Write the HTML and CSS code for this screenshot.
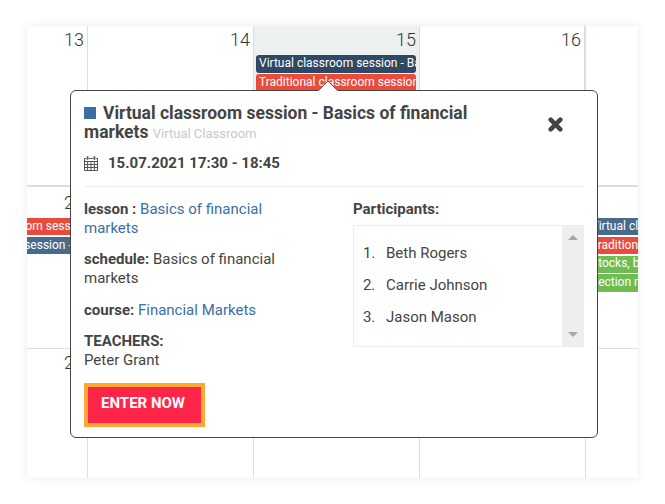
FILE: index.html
```html
<!DOCTYPE html>
<html lang="en">
<head>
<meta charset="utf-8">
<title>Calendar</title>
<link rel="stylesheet" href="styles.css">
</head>
<body>
<main class="stage">
  <div class="calendar">
    <div class="grid">
      <div class="cell row-a"><div class="date">13</div></div>
      <div class="cell row-a"><div class="date">14</div></div>
      <div class="cell row-a today"><div class="date">15</div>
        <div class="events">
          <div class="event navy">Virtual classroom session - Basics of financial markets</div>
          <div class="event red">Traditional classroom session - Basics of financial markets</div>
        </div>
      </div>
      <div class="cell row-a thick"><div class="date">16</div></div>
      <div class="cell row-a"><div class="date">17</div></div>

      <div class="cell row-b"><div class="date">20</div>
        <div class="events">
          <div class="event flat red">Traditional classroom session - Basics</div>
          <div class="event flat blue">Virtual classroom session - Basics</div>
        </div>
      </div>
      <div class="cell row-b"><div class="date">21</div></div>
      <div class="cell row-b"><div class="date">22</div></div>
      <div class="cell row-b"><div class="date">23</div></div>
      <div class="cell row-b"><div class="date">24</div>
        <div class="events">
          <div class="event flat blue">Virtual classroom session</div>
          <div class="event flat red">Traditional classroom session</div>
          <div class="event flat green">Stocks, bonds and funds</div>
          <div class="event flat green last">Section notes</div>
        </div>
      </div>

      <div class="cell row-c"><div class="date">27</div></div>
      <div class="cell row-c"><div class="date">28</div></div>
      <div class="cell row-c"><div class="date">29</div></div>
      <div class="cell row-c"><div class="date">30</div></div>
      <div class="cell row-c"><div class="date">31</div></div>
    </div>
  </div>

  <section class="popup">
    <span class="arrow"></span>
    <header class="head">
      <div class="head-text">
        <h2 class="title"><span class="swatch"></span>Virtual classroom session - Basics of financial markets <small class="kind">Virtual Classroom</small></h2>
        <p class="when">
          <svg class="cal-icon" viewBox="0 0 14 15" aria-hidden="true">
            <path class="cal-line" d="M.5 2.500h13v12H.5zM.5 5.500h13M.5 8.500h13M.5 11.500h13M3.600 5.500v9M7 5.500v9M10.400 5.500v9"/>
            <rect class="cal-ring" x="2.500" y="0" width="2.200" height="4" rx=".8"/>
            <rect class="cal-ring" x="9.300" y="0" width="2.200" height="4" rx=".8"/>
          </svg>
          15.07.2021 17:30 - 18:45
        </p>
      </div>
      <svg class="close" viewBox="0 0 14 14" aria-hidden="true">
        <path d="M2.500 2.500 11.500 11.500M11.500 2.500 2.500 11.500"/>
      </svg>
    </header>
    <div class="body">
      <div class="info">
        <p class="line"><b>lesson :</b> <a href="#">Basics of financial markets</a></p>
        <p class="line"><b>schedule:</b> Basics of financial markets</p>
        <p class="line"><b>course:</b> <a href="#">Financial Markets</a></p>
        <p class="line"><b>TEACHERS:</b><br>Peter Grant</p>
        <button class="enter" type="button">ENTER NOW</button>
      </div>
      <div class="people">
        <h3 class="people-title">Participants:</h3>
        <div class="people-box">
          <ol class="people-list">
            <li>Beth Rogers</li>
            <li>Carrie Johnson</li>
            <li>Jason Mason</li>
          </ol>
          <div class="scroll"><span class="up"></span><span class="down"></span></div>
        </div>
      </div>
    </div>
  </section>
</main>
</body>
</html>
```

FILE: styles.css
```css
* { box-sizing: border-box; }
html, body { margin: 0; background: #fff; }
body { font-family: Roboto, "Liberation Sans", sans-serif; color: #444; width: 665px; height: 504px; overflow: hidden; }
.stage { position: relative; padding: 26px 27px; }

.calendar { width: 611px; height: 452px; overflow: hidden; background: #fff; box-shadow: 0 0 8px rgba(0,0,0,.09); }
.grid { display: grid; grid-template-columns: repeat(5, 166px); grid-template-rows: 161px 162px 129px; width: 830px; margin-left: -105px; }
.cell { border-right: 1px solid #ddd; min-width: 0; overflow: hidden; }
.row-a { border-bottom: 2px solid #ddd; }
.row-b { border-bottom: 1px solid #ddd; padding-top: 2px; }
.today { background: #ecf0f1; }
.thick { border-right-width: 2px; }
.date { height: 29px; padding: 4px 3px 0 0; text-align: right; font-size: 18px; font-weight: 300; line-height: 20px; color: #333; }
.events { display: flex; flex-direction: column; gap: 1px; padding: 0 3px 0 2px; }
.event { height: 18px; padding: 0 3px; font-size: 12px; line-height: 17px; color: #fff; white-space: nowrap; overflow: hidden; border-radius: 3px; }
.flat { height: 17px; margin-bottom: 1px; border-radius: 0; }
.navy { background: #2f4864; }
.blue { background: #4a6a8c; }
.red { background: #ea4c3c; }
.green { background: #71bc52; line-height: 15px; }
.last { height: 18px; margin-top: -1px; line-height: 17px; }

.popup { position: absolute; left: 70px; top: 90px; width: 528px; height: 348px; padding: 13px; background: #fff; border: 1px solid #444; border-radius: 6px; }
.arrow { position: absolute; left: 250px; top: -8px; width: 14px; height: 14px; background: #fff; border: 1px solid #444; border-right: 0; border-bottom: 0; transform: rotate(45deg); border-top-left-radius: 2px; }
.head { display: flex; justify-content: space-between; border-bottom: 1px solid #eee; height: 83px; }
.head-text { width: 400px; }
.title { margin: 0; font-size: 17.500px; line-height: 19px; font-weight: 700; color: #444; }
.swatch { display: inline-block; width: 12px; height: 12px; margin-right: 7px; background: #3b6ea5; }
.kind { font-size: 13px; font-weight: 400; color: #c5c8d0; }
.when { display: flex; align-items: center; gap: 10px; margin: 10px 0 0; font-size: 15px; line-height: 20px; font-weight: 700; }
.cal-icon { width: 14px; height: 15px; flex: none; }
.cal-line { fill: none; stroke: #555; stroke-width: 1; }
.cal-ring { fill: #555; stroke: #fff; stroke-width: .5; }
.close { width: 15px; height: 15px; margin: 13px 21px 0 0; flex: none; }
.close path { fill: none; stroke: #444; stroke-width: 4.200; stroke-linecap: round; }

.body { display: flex; gap: 0; padding-top: 13px; }
.info { width: 269px; padding-right: 60px; font-size: 15px; line-height: 19px; }
.line { margin: 0 0 12.400px; }
.line b { font-weight: 700; }
.line a { color: #3b6ea5; text-decoration: none; }
.enter { display: block; width: 121px; height: 44px; padding: 0 3px 3px 0; background: #ff2549; border: 4px solid #ffa733; color: #fff; font: 700 15px/20px Roboto, "Liberation Sans", sans-serif; }

.people { width: 231px; }
.people-title { margin: 0 0 6px; font-size: 15px; line-height: 19px; font-weight: 700; }
.people-box { display: flex; justify-content: space-between; height: 122px; border: 1px solid #eee; }
.people-list { margin: 0; padding: 11px 0 0 25px; font-size: 15px; line-height: 32px; }
.people-list li { padding-left: 7px; }
.scroll { display: flex; flex-direction: column; justify-content: space-between; align-items: center; width: 21px; padding: 9px 0; background: #eee; }
.up, .down { width: 0; height: 0; border-left: 5px solid transparent; border-right: 5px solid transparent; }
.up { border-bottom: 5px solid #a6a6a6; }
.down { border-top: 5px solid #a6a6a6; }
```
